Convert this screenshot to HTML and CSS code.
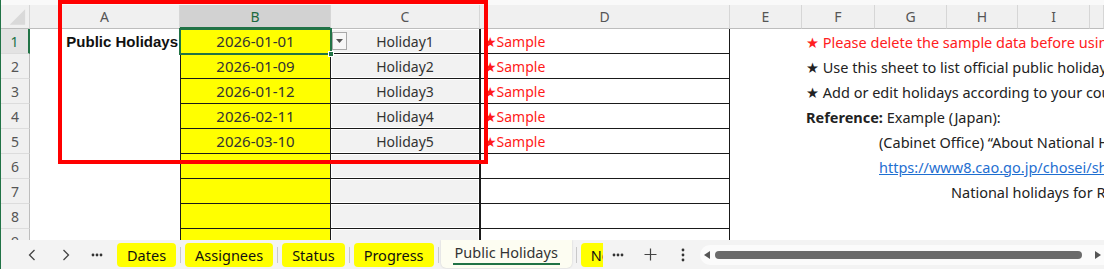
FILE: index.html
```html
<!DOCTYPE html>
<html lang="en">
<head>
    <meta charset="UTF-8">
    <title>Public Holidays</title>
    <link rel="stylesheet" href="styles.css">
</head>
<body>

<div class="page">
    <div class="top-strip"></div>

    <div class="sheet">
        <!-- column headers -->
        <div class="ch corner">
            <svg width="29" height="23" viewBox="0 0 29 23"><polygon points="9,20 25,20 25,4" fill="#d9d9d9"/></svg>
        </div>
        <div class="ch">A</div>
        <div class="ch sel">B</div>
        <div class="ch">C</div>
        <div class="ch">D</div>
        <div class="ch">E</div>
        <div class="ch">F</div>
        <div class="ch">G</div>
        <div class="ch">H</div>
        <div class="ch">I</div>
        <div class="ch"></div>

        <!-- row 1 -->
        <div class="rh sel">1</div>
        <div class="cell label">Public Holidays</div>
        <div class="cell date active">2026-01-01
            <span class="dropdown"><svg width="7" height="4" viewBox="0 0 7 4"><polygon points="0,0 7,0 3.5,4" fill="#555"/></svg></span>
            <span class="handle"></span>
        </div>
        <div class="cell name">Holiday1</div>
        <div class="cell mark">★Sample</div>
        <div class="cell"></div>
        <div class="cell note red span5">★ Please delete the sample data before using this sheet.</div>

        <!-- row 2 -->
        <div class="rh">2</div>
        <div class="cell"></div>
        <div class="cell date">2026-01-09</div>
        <div class="cell name">Holiday2</div>
        <div class="cell mark">★Sample</div>
        <div class="cell"></div>
        <div class="cell note span5">★ Use this sheet to list official public holidays for your country.</div>

        <!-- row 3 -->
        <div class="rh">3</div>
        <div class="cell"></div>
        <div class="cell date">2026-01-12</div>
        <div class="cell name">Holiday3</div>
        <div class="cell mark">★Sample</div>
        <div class="cell"></div>
        <div class="cell note span5">★ Add or edit holidays according to your country or region.</div>

        <!-- row 4 -->
        <div class="rh">4</div>
        <div class="cell"></div>
        <div class="cell date">2026-02-11</div>
        <div class="cell name">Holiday4</div>
        <div class="cell mark">★Sample</div>
        <div class="cell"></div>
        <div class="cell note span5"><b>Reference:</b>&nbsp;Example (Japan):</div>

        <!-- row 5 -->
        <div class="rh">5</div>
        <div class="cell"></div>
        <div class="cell date">2026-03-10</div>
        <div class="cell name">Holiday5</div>
        <div class="cell mark">★Sample</div>
        <div class="cell"></div>
        <div class="cell"></div>
        <div class="cell note span4">(Cabinet Office) “About National Holidays”</div>

        <!-- row 6 -->
        <div class="rh">6</div>
        <div class="cell"></div>
        <div class="cell date"></div>
        <div class="cell name"></div>
        <div class="cell mark"></div>
        <div class="cell"></div>
        <div class="cell"></div>
        <div class="cell note span4"><a href="#">https://www8.cao.go.jp/chosei/shukujitsu/gaiyou.html</a></div>

        <!-- row 7 -->
        <div class="rh">7</div>
        <div class="cell"></div>
        <div class="cell date"></div>
        <div class="cell name"></div>
        <div class="cell mark"></div>
        <div class="cell"></div>
        <div class="cell"></div>
        <div class="cell"></div>
        <div class="cell note span3">National holidays for Reiwa 8 (2026)</div>

        <!-- row 8 -->
        <div class="rh">8</div>
        <div class="cell"></div>
        <div class="cell date"></div>
        <div class="cell name"></div>
        <div class="cell mark"></div>
        <div class="cell span6"></div>

        <!-- row 9 -->
        <div class="rh">9</div>
        <div class="cell"></div>
        <div class="cell date"></div>
        <div class="cell name"></div>
        <div class="cell mark"></div>
        <div class="cell span6"></div>
    </div>

    <div class="tabbar">
        <span class="nav first"><svg width="8" height="12" viewBox="0 0 8 12"><path d="M6.5 1 L1.5 6 L6.5 11" fill="none" stroke="#444" stroke-width="1.3"/></svg></span>
        <span class="nav second"><svg width="8" height="12" viewBox="0 0 8 12"><path d="M1.5 1 L6.5 6 L1.5 11" fill="none" stroke="#444" stroke-width="1.3"/></svg></span>
        <span class="nav third"><svg width="12" height="4" viewBox="0 0 12 4"><circle cx="2" cy="2" r="1.4" fill="#333"/><circle cx="6" cy="2" r="1.4" fill="#333"/><circle cx="10" cy="2" r="1.4" fill="#333"/></svg></span>

        <div class="tabs">
            <span class="tab">Dates</span>
            <span class="sep"></span>
            <span class="tab">Assignees</span>
            <span class="sep"></span>
            <span class="tab">Status</span>
            <span class="sep"></span>
            <span class="tab">Progress</span>
            <span class="sep"></span>
            <span class="tab current"><span class="current-text">Public Holidays</span></span>
            <span class="sep"></span>
            <span class="tab">Notes</span>
        </div>

        <span class="nav more"><svg width="12" height="4" viewBox="0 0 12 4"><circle cx="2" cy="2" r="1.4" fill="#333"/><circle cx="6" cy="2" r="1.4" fill="#333"/><circle cx="10" cy="2" r="1.4" fill="#333"/></svg></span>
        <span class="nav add"><svg width="13" height="13" viewBox="0 0 13 13"><path d="M6.5 0.5 V12.5 M0.5 6.5 H12.5" stroke="#444" stroke-width="1.2"/></svg></span>
        <span class="nav opts"><svg width="4" height="14" viewBox="0 0 4 14"><circle cx="2" cy="2" r="1.4" fill="#333"/><circle cx="2" cy="7" r="1.4" fill="#333"/><circle cx="2" cy="12" r="1.4" fill="#333"/></svg></span>

        <div class="hscroll">
            <svg class="arrow" width="6" height="8" viewBox="0 0 6 8"><polygon points="6,0 6,8 0,4" fill="#555"/></svg>
            <span class="thumb"></span>
            <svg class="arrow" width="6" height="8" viewBox="0 0 6 8"><polygon points="0,0 0,8 6,4" fill="#555"/></svg>
        </div>
    </div>
</div>

<div class="callout"></div>

</body>
</html>
```

FILE: styles.css
```css
* {
    box-sizing: border-box;
}
body {
    margin: 0;
    width: 1104px;
    height: 269px;
    overflow: hidden;
    position: relative;
    background: #fff;
    font-family: "Noto Sans", "DejaVu Sans", sans-serif;
}
.page {
    height: 269px;
    border-left: 1px solid #217346; /* window edge */
    display: flex;
    flex-direction: column;
}
.top-strip {
    height: 5px;
    background: #f9f9f9;
}

/* grid */
.sheet {
    display: grid;
    grid-template-columns: 29px 150px 151px 149px 250px 72px 73px 72px 71px 72px 14px;
    grid-template-rows: 24px repeat(9, 25px);
    height: 235px;
    overflow: hidden;
    font-size: 14px;
    color: #222;
}
.ch {
    background: #f0f0f0;
    border-right: 1px solid #d6d6d6;
    border-bottom: 1px solid #bdbdbd;
    color: #555;
    display: flex;
    align-items: center;
    justify-content: center;
}
.ch.sel {
    background: #d2d2d2;
    color: #1e6b41;
    border-bottom: 2px solid #217346;
}
.corner {
    padding: 0;
}
.rh {
    background: #f0f0f0;
    border-right: 1px solid #bdbdbd;
    border-bottom: 1px solid #dcdcdc;
    color: #555;
    display: flex;
    align-items: center;
    justify-content: center;
}
.rh.sel {
    background: #e3e3e3;
    color: #217346;
    border-right: 2px solid #217346;
}
.cell {
    display: flex;
    align-items: center;
    white-space: nowrap;
    min-width: 0;
    position: relative;
}
.label {
    justify-content: flex-end;
    padding-right: 2px;
    font-family: "Liberation Sans", Arial, sans-serif;
    font-weight: bold;
    font-size: 15px;
    color: #111;
}
.date {
    background: #ffff00;
    border-left: 1px solid #1a1a1a;
    border-right: 1px solid #1a1a1a;
    border-bottom: 1px solid #1a1a1a;
    justify-content: center;
    font-size: 15px;
    color: #333;
}
.date.active {
    outline: 2px solid #217346;
    outline-offset: -1px;
    z-index: 1;
}
.dropdown {
    position: absolute;
    left: 151px;
    top: 3px;
    width: 15px;
    height: 18px;
    background: #f7f7f7;
    border: 1px solid #a9a9a9;
    display: flex;
    align-items: center;
    justify-content: center;
}
.handle {
    position: absolute;
    right: -4px;
    bottom: -4px;
    width: 6px;
    height: 6px;
    background: #217346;
    border: 1px solid #fff;
}
.name {
    background: #f2f2f2;
    border-right: 1px solid #1a1a1a;
    border-bottom: 1px solid #1a1a1a;
    box-shadow: inset 0 0 0 1px #fff;
    justify-content: center;
    color: #333;
}
.mark {
    border-left: 1px solid #1a1a1a;
    border-right: 1px solid #1a1a1a;
    border-bottom: 1px solid #1a1a1a;
    color: #ff1a1a;
    padding-left: 3px;
}
.mark::first-letter {
    font-size: 16px;
}
.note {
    overflow: hidden;
    padding-left: 4px;
    font-size: 14.5px;
    color: #222;
}
.note.red {
    color: #ff2020;
}
.note a {
    color: #1f6fd1;
}
.span3 { grid-column: span 3; }
.span4 { grid-column: span 4; }
.span5 { grid-column: span 5; }
.span6 { grid-column: span 6; }

/* sheet tabs */
.tabbar {
    height: 29px;
    background: #f3f3f3;
    display: flex;
    align-items: center;
    padding-left: 21px;
    font-size: 14.5px;
    color: #111;
}
.nav {
    width: 20px;
    height: 20px;
    display: flex;
    align-items: center;
    justify-content: center;
    flex-shrink: 0;
}
.nav.second { margin-left: 14px; }
.nav.third { margin-left: 11px; }
.tabs {
    margin-left: 10px;
    width: 486px;
    height: 29px;
    overflow: hidden;
    display: flex;
    align-items: center;
    flex-shrink: 0;
}
.tab {
    height: 24px;
    padding: 0 10px;
    background: #ffff00;
    border-radius: 4px;
    display: flex;
    align-items: center;
    flex-shrink: 0;
}
.tab.current {
    height: 28px;
    margin-top: -1px;
    padding: 0 12px;
    margin-left: -2px;
    background: #fdfdf2;
    border-radius: 0 0 5px 5px;
    box-shadow: 0 0 2px rgba(0, 0, 0, 0.18);
    color: #333;
}
.current-text {
    border-bottom: 2px solid #217346;
    line-height: 19px;
    padding: 0 2px 1px;
}
.sep {
    width: 1px;
    height: 16px;
    background: #c9c9c9;
    margin: 0 4px;
    flex-shrink: 0;
}
.nav.more { margin-left: 5px; }
.nav.add { margin-left: 12px; }
.nav.opts { margin-left: 13px; }
.hscroll {
    margin-left: 7px;
    flex: 1;
    height: 20px;
    background: #fbfbfb;
    border-radius: 10px 0 0 10px;
    display: flex;
    align-items: center;
    padding-left: 4px;
}
.thumb {
    margin-left: 5px;
    width: 367px;
    height: 8px;
    border-radius: 4px;
    background: #6b6b6b;
}
.hscroll .arrow:last-child {
    margin-left: 13px;
}

/* red highlight box drawn over the table */
.callout {
    position: absolute;
    left: 58px;
    top: 0;
    width: 430px;
    height: 164px;
    border: 4px solid #ff0000;
    pointer-events: none;
}
```
